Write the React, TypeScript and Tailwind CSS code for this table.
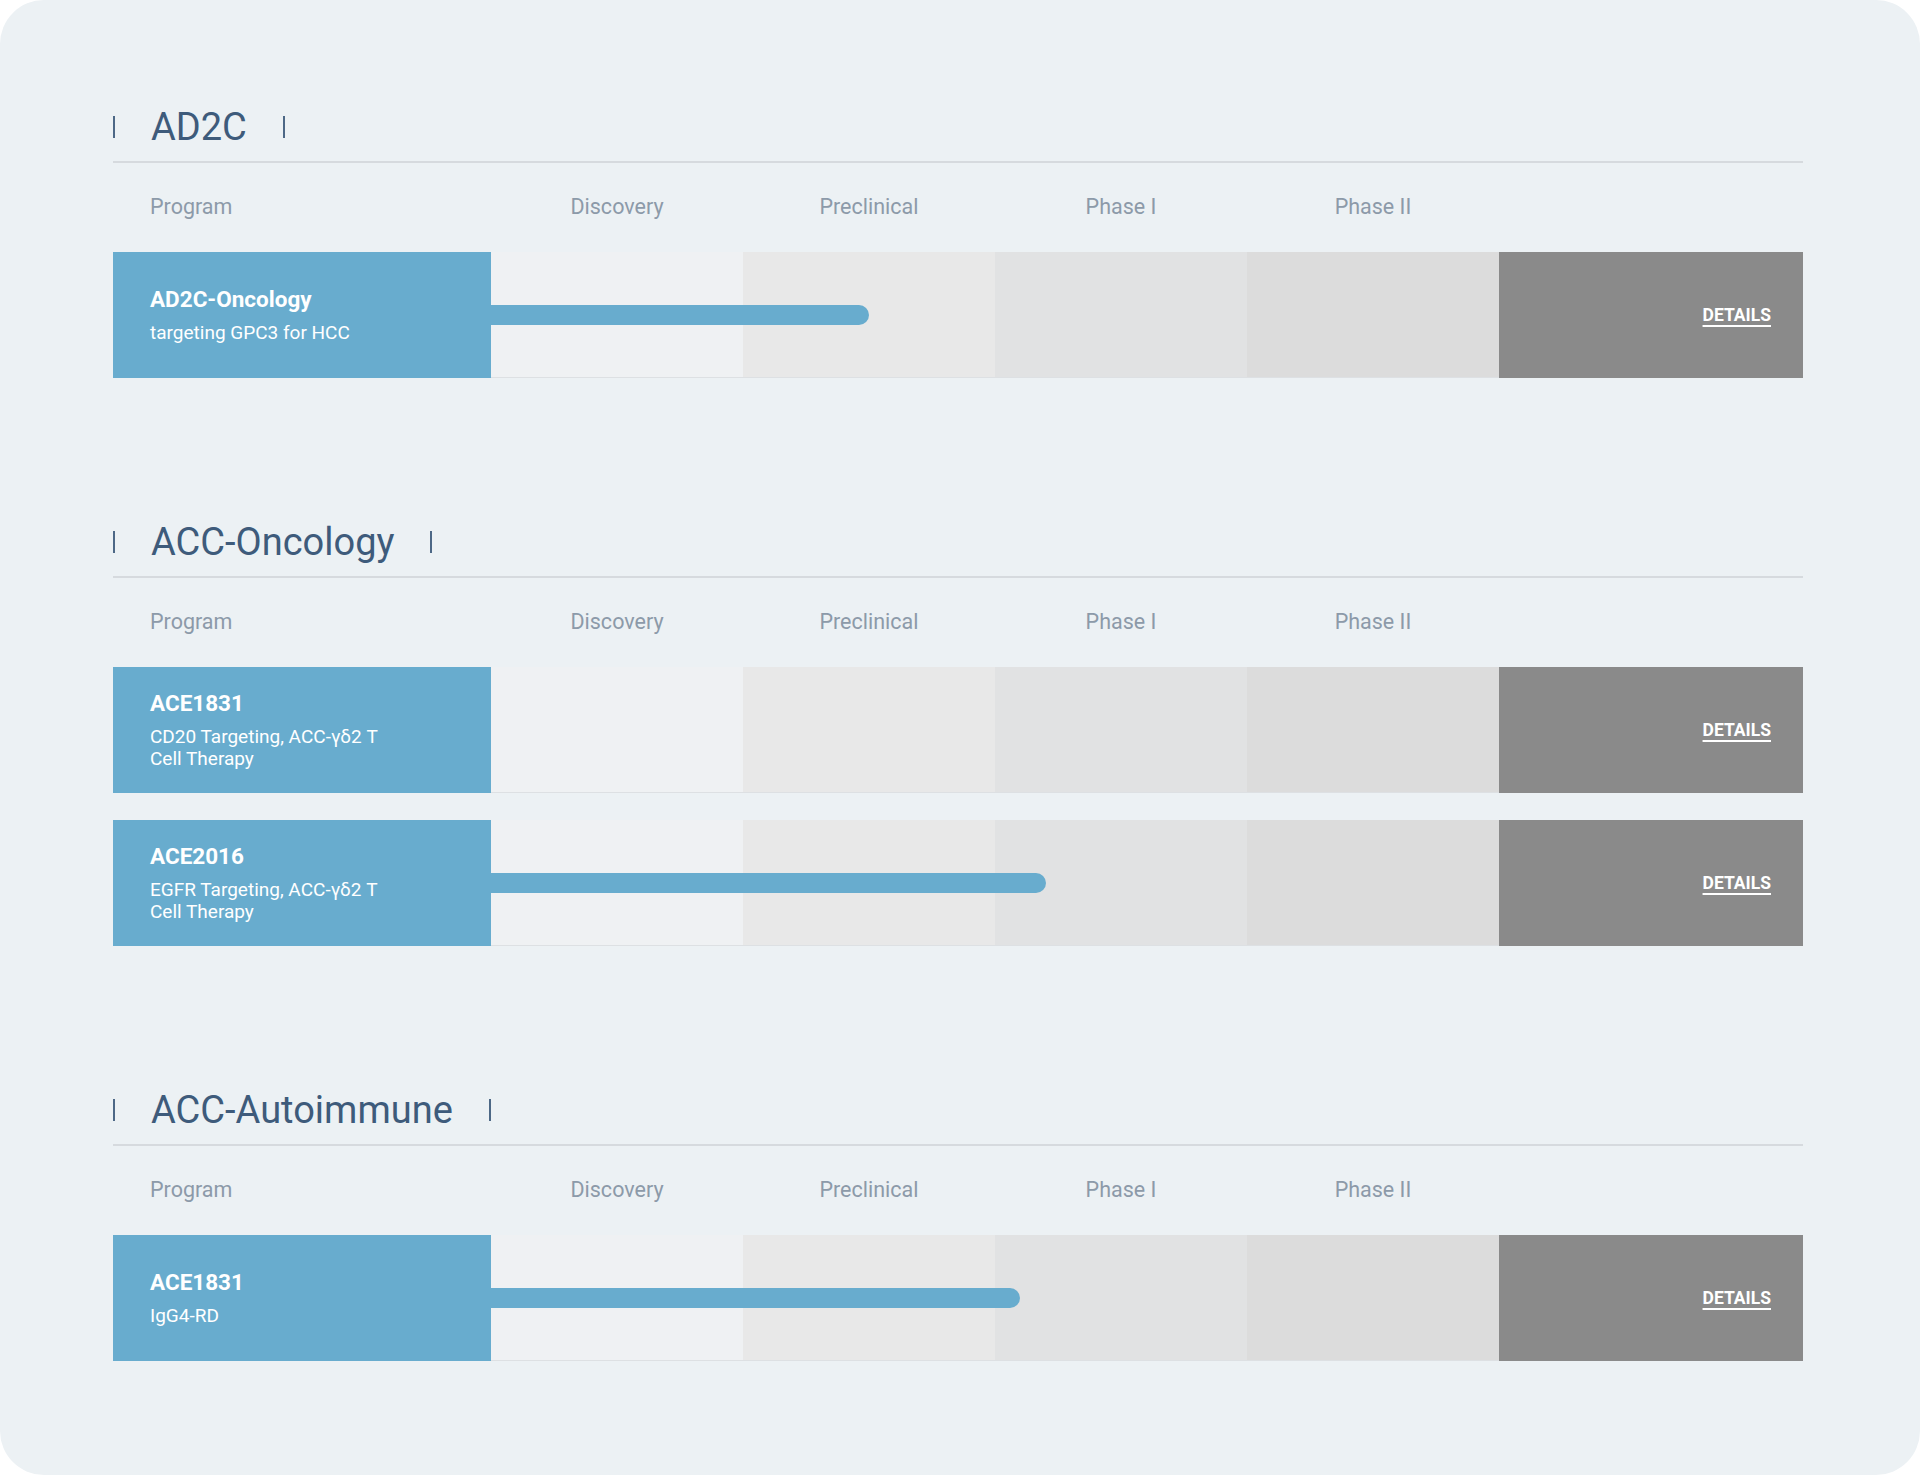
import React from 'react';

type Program = {
  name: string;
  desc: string;
  // bar length in px from the start of the Discovery column, 0 = no bar
  bar: number;
};

type Section = {
  title: string;
  programs: Program[];
};

const STAGES = ['Discovery', 'Preclinical', 'Phase I', 'Phase II'];

const STAGE_BG = ['bg-[#eff1f3]', 'bg-[#e8e8e8]', 'bg-[#e1e2e3]', 'bg-[#dcdcdc]'];

const SECTIONS: Section[] = [
  {
    title: 'AD2C',
    programs: [{ name: 'AD2C-Oncology', desc: 'targeting GPC3 for HCC', bar: 378 }],
  },
  {
    title: 'ACC-Oncology',
    programs: [
      { name: 'ACE1831', desc: 'CD20 Targeting, ACC-γδ2 T Cell Therapy', bar: 0 },
      { name: 'ACE2016', desc: 'EGFR Targeting, ACC-γδ2 T Cell Therapy', bar: 555 },
    ],
  },
  {
    title: 'ACC-Autoimmune',
    programs: [{ name: 'ACE1831', desc: 'IgG4-RD', bar: 529 }],
  },
];

const PipelineRow: React.FC<{ program: Program }> = ({ program }) => (
  <div className="flex h-[126px]">
    {/* 프로그램 이름 */}
    <div className="w-[378px] shrink-0 bg-[#68acce] flex flex-col justify-center pl-[37px] text-white">
      <p className="text-[22.5px] leading-[26px] font-bold">{program.name}</p>
      <p className="text-[19px] leading-[22px] mt-[10px] max-w-[250px]">{program.desc}</p>
    </div>

    {/* 단계 칸 + 진행 바 */}
    <div className="relative flex">
      {STAGE_BG.map((bg) => (
        <div key={bg} className={`w-[252px] h-full ${bg} border-b border-[#dde0e3]`} />
      ))}
      {program.bar > 0 ? (
        <div
          className="absolute left-0 top-1/2 -translate-y-1/2 h-[20px] bg-[#68acce] rounded-r-full"
          style={{ width: program.bar }}
        />
      ) : null}
    </div>

    {/* 상세 버튼 */}
    <div className="flex-1 bg-[#8a8a8a] flex items-center justify-end pr-[32px]">
      <a
        href="#"
        className="text-white text-[17.5px] font-bold underline underline-offset-[4px] decoration-[1.5px]"
      >
        DETAILS
      </a>
    </div>
  </div>
);

const PipelineSection: React.FC<{ section: Section }> = ({ section }) => (
  <section className="mb-[140px] last:mb-0">
    <div className="pb-[10px] border-b-2 border-[#d6dade]">
      <h2 className="inline-flex items-center gap-[36px] h-[48px] text-[38px] leading-[48px] font-normal text-[#3e5b7b]">
        <span className="w-[2px] h-[22px] bg-[#4d6886]" />
        {section.title}
        <span className="w-[2px] h-[22px] bg-[#4d6886]" />
      </h2>
    </div>

    <div className="flex h-[89px] items-center text-[21.5px] text-[#8c9aa9]">
      <div className="w-[378px] pl-[37px]">Program</div>
      {STAGES.map((s) => (
        <div key={s} className="w-[252px] text-center">
          {s}
        </div>
      ))}
    </div>

    <div className="flex flex-col gap-[27px]">
      {section.programs.map((p) => (
        <PipelineRow key={p.name + p.desc} program={p} />
      ))}
    </div>
  </section>
);

const App: React.FC = () => {
  return (
    <div className="min-h-screen bg-white" style={{ fontFamily: 'Roboto, "Noto Sans", sans-serif' }}>
      <div className="w-[1920px] h-[1475px] bg-[#ecf1f4] rounded-[44px] pt-[103px]">
        <div className="w-[1690px] ml-[113px]">
          {SECTIONS.map((s) => (
            <PipelineSection key={s.title} section={s} />
          ))}
        </div>
      </div>
    </div>
  );
};

export default App;
